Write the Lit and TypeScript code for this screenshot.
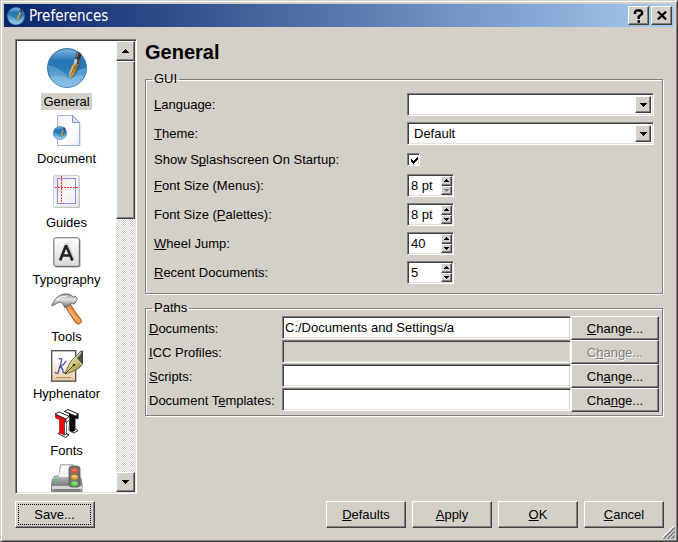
import { LitElement, html, svg, css, nothing, TemplateResult } from "lit";
import { customElement, state } from "lit/decorators.js";

/** Text with one underlined access key. */
const keyed = (text: string, at: number) =>
  at < 0 ? html`${text}` : html`${text.slice(0, at)}<u>${text[at]}</u>${text.slice(at + 1)}`;

/** Blue globe with a paint brush, on a 40 x 40 grid. */
const globe = (id: string) => svg`
  <defs>
    <linearGradient id="${id}-sky" x1="0" y1="0" x2="0" y2="1">
      <stop offset="0" stop-color="#4f93c6"/><stop offset=".3" stop-color="#2a74b2"/>
      <stop offset=".55" stop-color="#2c7cb8"/><stop offset="1" stop-color="#6db4de"/>
    </linearGradient>
    <linearGradient id="${id}-gloss" x1="0" y1="0" x2="0" y2="1">
      <stop offset="0" stop-color="#8cbfe0" stop-opacity=".75"/><stop offset="1" stop-color="#4b97cb" stop-opacity=".1"/>
    </linearGradient>
    <linearGradient id="${id}-gold" x1="0" y1="0" x2="1" y2=".4">
      <stop offset="0" stop-color="#f7e3a8"/><stop offset=".5" stop-color="#d9ac58"/><stop offset="1" stop-color="#6d4a17"/>
    </linearGradient>
  </defs>
  <circle cx="20" cy="20" r="19.5" fill="url(#${id}-sky)" stroke="#2b6a9c" stroke-width=".8"/>
  <path d="M3 13C6 5 13 1.500 20 1.500S34 5 37 13C27 10 13 10 3 13Z" fill="url(#${id}-gloss)"/>
  <path d="M1 17C10 19 18 24 22 31C25 25 32 21 39 20C39 30 31 39 20 39S1 30 1 17Z" fill="#8cc4e6" opacity=".4"/>
  <path d="M3 29C10 27 17 28 22 31C28 28 33 27 37 28C33 36 27 39 20 39S7 36 3 29Z" fill="#a8d8f2" opacity=".35"/>
  <path d="M22 31C27 31 31 24 34 15L32 14Z" fill="#1c4f7c" opacity=".5"/>
  <path d="M22 31C22 26 23 21 27 15L31 16.500C31 22 27 28 22 31Z" fill="url(#${id}-gold)"/>
  <path d="M23 29L28 18" stroke="#5d4316" stroke-width=".7"/>
  <path d="M26.500 15L28 10.500L33 12.500L31.500 17Z" fill="#c3c9ce"/>
  <path d="M30.500 11.500L33 12.500L31.500 17L29.500 16Z" fill="#454b52"/>
  <path d="M28 10.500L30 3.500Q33 4 34.500 6.500L33 12.500Z" fill="#33373d"/>
  <path d="M29.500 9.500L31 4.500" stroke="#9aa1a8" stroke-width="1"/>`;

const globeIcon = (id: string, size: number) =>
  html`<svg width=${size} height=${size} viewBox="0 0 40 40" aria-hidden="true">${globe(id)}</svg>`;

const documentIcon = html`<svg width="32" height="32" viewBox="-1 0 32 32" aria-hidden="true">
  <defs><linearGradient id="sheet" x1="0" y1="0" x2="1" y2="1">
    <stop offset="0" stop-color="#eef1fb"/><stop offset=".6" stop-color="#ffffff"/><stop offset="1" stop-color="#e4e9f7"/>
  </linearGradient></defs>
  <path d="M6 1H21L28.500 8.500V31H6Z" fill="#c9d0e8"/>
  <path d="M5.500 .5H20.500L27.500 7.500V30.500H5.500Z" fill="url(#sheet)" stroke="#a3b1dc"/>
  <path d="M20.500 .5V7.500H27.500Z" fill="#dfe5f6" stroke="#8496cb"/>
  <svg x="1" y="11" width="14" height="14" viewBox="0 0 40 40">${globe("docglobe")}</svg>
</svg>`;

const guidesIcon = html`<svg width="27" height="33" viewBox="0 0 27 33" aria-hidden="true">
  <defs><linearGradient id="guide" x1="0" y1="0" x2="1" y2="1">
    <stop offset="0" stop-color="#dedede"/><stop offset=".5" stop-color="#fafafa"/><stop offset="1" stop-color="#e6e6e6"/>
  </linearGradient></defs>
  <rect x="1" y="1" width="26" height="32" rx="1.500" fill="#b5b5b5"/>
  <rect x=".5" y=".5" width="25.500" height="31.500" rx="1" fill="url(#guide)" stroke="#d2d2d2"/>
  <g shape-rendering="crispEdges">
    <rect x="4.500" y="3.500" width="18" height="25" fill="none" stroke="#8c8cf0"/>
    <path d="M8.500 1V29M2 12.500H26" stroke="#ff2a2a" stroke-dasharray="2 1"/>
  </g>
</svg>`;

const typographyIcon = html`<svg width="28" height="31" viewBox="0 0 28 31" aria-hidden="true">
  <defs><linearGradient id="key" x1="0" y1="0" x2="0" y2="1">
    <stop offset="0" stop-color="#ffffff"/><stop offset="1" stop-color="#dadada"/>
  </linearGradient></defs>
  <rect x="1.500" y="1.500" width="26" height="29" rx="2" fill="#9c9c9c"/>
  <rect x=".8" y=".8" width="25.500" height="28.500" rx="2" fill="url(#key)" stroke="#666"/>
  <path d="M13.500 6L6.500 23M13.500 6L20 22" stroke="#9a9a9a" stroke-width="3" opacity=".35"/>
  <path d="M7.200 23.500L13 8.500L19.500 23.500M9.500 18.500H17.500" fill="none" stroke="#242424" stroke-width="2.600" stroke-linejoin="bevel"/>
</svg>`;

const toolsIcon = html`<svg width="32" height="32" viewBox="0 0 32 32" aria-hidden="true">
  <defs>
    <linearGradient id="wood" x1="0" y1="1" x2="1" y2="0">
      <stop offset=".3" stop-color="#c9651b"/><stop offset=".5" stop-color="#f8a555"/><stop offset=".7" stop-color="#b85a18"/>
    </linearGradient>
    <linearGradient id="steel" x1="0" y1="0" x2="0" y2="1">
      <stop offset="0" stop-color="#8d9294"/><stop offset=".4" stop-color="#e4e7e8"/><stop offset="1" stop-color="#5d6264"/>
    </linearGradient>
  </defs>
  <path d="M14 13L18.500 10L23 17L30 26.500Q31.500 30 28 31Q25.500 31.500 24 29L17.500 19Z" fill="url(#wood)" stroke="#8c4715" stroke-width=".8"/>
  <path d="M18 17L26 28" stroke="#ffd0a0" stroke-width="1"/>
  <path d="M1 12Q4 4 11 1.500Q15 0 19 1.500L22.500 4L24 3L26.500 5.500L23.500 11L20 10.500L18.500 12L14 15L11.500 10Q9 8 6.500 10L1 13Z" fill="url(#steel)" stroke="#64696b" stroke-width=".9" stroke-linejoin="round"/>
  <path d="M5 7Q10 3 16 3" fill="none" stroke="#fff" stroke-width="1"/>
</svg>`;

const hyphenIcon = html`<svg width="32" height="32" viewBox="0 0 32 32" aria-hidden="true">
  <defs>
    <linearGradient id="paper" x1="0" y1="0" x2="0" y2="1">
      <stop offset=".3" stop-color="#fdfdfb"/><stop offset="1" stop-color="#e8c89c"/>
    </linearGradient>
    <linearGradient id="nib" x1="0" y1="0" x2="1" y2="1">
      <stop offset="0" stop-color="#f5edbd"/><stop offset=".5" stop-color="#d4c27c"/><stop offset="1" stop-color="#6d6130"/>
    </linearGradient>
  </defs>
  <rect x=".7" y=".7" width="24" height="30.500" fill="url(#paper)" stroke="#4d4d4d" stroke-width="1.300"/>
  <path d="M8 9Q12 7 10 13L7 23Q5 24 4 22M15 11Q12 16 8 17Q12 17 12 22Q13 24 16 22" fill="none" stroke="#4850a8" stroke-width="1.300"/>
  <path d="M5 27.500H20" stroke="#a89372"/>
  <path d="M14 24C16 19 18 12 24 7L31 15C27 20 21 22 14 24Z" fill="url(#nib)" stroke="#5c532d" stroke-width=".8"/>
  <path d="M14 24L23 15" stroke="#4c4420"/><circle cx="23" cy="15" r="1.300" fill="#332e18"/>
  <path d="M24 7L29 1.500Q31 0 32 1V14L31 15Z" fill="#4b4b45"/>
  <path d="M25.500 7.500L30 2.500" stroke="#d3d2c4" stroke-width="1.500"/><path d="M24 7L31 15" stroke="#d7c987" stroke-width="1.500"/>
</svg>`;

const fontsIcon = html`<svg width="26" height="31" viewBox="0 0 26 31" aria-hidden="true">
  <path d="M16 8L21 10V21L24 22.500L20 25L15 22.500Z" fill="#fff" stroke="#111" stroke-width=".9"/>
  <path d="M10 3.500L15 6V8.500L16 9V23L19 24L21 22.500V10.500L24.500 11V6L14 1.500Z" fill="#0c0c0c"/>
  <path d="M10.500 3.500L14 1.500L24.500 6L21.500 8Z" fill="#fff" stroke="#111" stroke-width=".9"/>
  <path d="M4 25.500L8 23.500L15 27L11.500 29.500Z" fill="#fff" stroke="#111" stroke-width=".9"/>
  <path d="M1.500 6.500L12 11V14.500L10.500 13.500V27L5.500 25V11.500L1.500 10Z" fill="#e80c0c" stroke="#a00" stroke-width=".6"/>
  <path d="M10.500 14L12.500 13.500V26L10.500 27Z" fill="#fff" stroke="#111" stroke-width=".6"/>
  <path d="M1 6L5 4L15.500 8.500L12 11Z" fill="#fff" stroke="#111" stroke-width=".9"/>
  <path d="M12 11L15.500 8.500V12L12 14.500Z" fill="#fff" stroke="#111" stroke-width=".7"/>
</svg>`;

const printerIcon = html`<svg width="32" height="32" viewBox="0 0 32 32" aria-hidden="true">
  <defs><linearGradient id="case" x1="0" y1="0" x2="0" y2="1">
    <stop offset="0" stop-color="#c0c0c0"/><stop offset=".5" stop-color="#858585"/><stop offset="1" stop-color="#a0a0a0"/>
  </linearGradient></defs>
  <path d="M9.500 .8H22V16H7.500Z" fill="#f7f7f7" stroke="#999"/>
  <path d="M4 12H28Q31 14 31 20V28H.5V20Q1 14 4 12Z" fill="url(#case)" stroke="#747474" stroke-width=".8"/>
  <path d="M8.500 8H20V13H7.500Z" fill="#f4f4f4"/>
  <path d="M1 22H31V25H1Z" fill="#d4d4d4"/><path d="M3 25H29V28H3Z" fill="#808080"/>
  <path d="M4 16H6M8 16H10" stroke="#37d637" stroke-width="2"/>
  <rect x="18" y="2" width="11" height="21" rx="3" fill="#747474" stroke="#555" stroke-width=".8"/>
  <ellipse cx="23.500" cy="6.500" rx="3.400" ry="2.600" fill="#ee4b34"/><ellipse cx="23.500" cy="13" rx="3.400" ry="2.600" fill="#f4ab2d"/>
  <ellipse cx="23.500" cy="19.500" rx="3.400" ry="2.600" fill="#55d645"/>
  <path d="M21.500 6H25.500M21.500 12.500H25.500M21.500 19H25.500" stroke="#fff" opacity=".6"/>
</svg>`;

const arrow = (up: boolean, w: number) => {
  const h = Math.ceil(w / 2);
  return html`<svg width=${w} height=${h} viewBox="0 0 ${w} ${h}" fill="currentColor" shape-rendering="crispEdges" aria-hidden="true">
    <path d=${up ? `M0 ${h}L${w / 2} 0L${w} ${h}Z` : `M0 0L${w / 2} ${h}L${w} 0Z`}></path></svg>`;
};

interface Section { name: string; icon: TemplateResult; size?: string }

const sections: Section[] = [
  { name: "General", icon: globeIcon("main", 40), size: "large" },
  { name: "Document", icon: documentIcon },
  { name: "Guides", icon: guidesIcon, size: "medium" },
  { name: "Typography", icon: typographyIcon },
  { name: "Tools", icon: toolsIcon },
  { name: "Hyphenator", icon: hyphenIcon },
  { name: "Fonts", icon: fontsIcon },
  { name: "", icon: printerIcon },
];

const spins = [
  { id: "menus", label: "Font Size (Menus):", key: 0, value: "8 pt", atMin: true },
  { id: "palettes", label: "Font Size (Palettes):", key: 11, value: "8 pt", atMin: false },
  { id: "wheel", label: "Wheel Jump:", key: 0, value: "40", atMin: false },
  { id: "recent", label: "Recent Documents:", key: 0, value: "5", atMin: false },
];

const paths = [
  { id: "docs", label: "Documents:", key: 0, value: "C:/Documents and Settings/a", change: 0, off: false },
  { id: "icc", label: "ICC Profiles:", key: 0, value: "", change: 1, off: true },
  { id: "scripts", label: "Scripts:", key: 0, value: "", change: 2, off: false },
  { id: "templates", label: "Document Templates:", key: 10, value: "", change: 3, off: false },
];

@customElement("app-root")
export class AppRoot extends LitElement {
  @state() private current = "General";

  static styles = css`
    :host {
      --face: #d4d0c8;
      display: block;
      font: 13px/17px "Liberation Sans", Arial, sans-serif;
      color: #000;
    }
    * { box-sizing: border-box; }
    svg { display: block; flex: none; }
    u { text-underline-offset: 1px; text-decoration-thickness: 1px; text-decoration-skip-ink: none; }
    button, input, select { font: inherit; color: inherit; margin: 0; padding: 0; border-radius: 0; outline: none; }
    .window {
      position: relative;
      display: flex;
      flex-direction: column;
      min-height: 100vh;
      padding: 2px;
      background: var(--face);
      border: 1px solid;
      border-color: var(--face) #404040 #404040 var(--face);
      box-shadow: inset 1px 1px #fff, inset -1px -1px #808080;
    }
    .titlebar {
      display: flex;
      align-items: center;
      gap: 2px;
      height: 23px;
      margin: 1px 1px 0;
      padding: 0 2px 0 3px;
      color: #fff;
      background: linear-gradient(90deg, #0a246a, #a6caf0);
    }
    .title { flex: 1; margin: 0; padding-left: 2px; font: 15px/20px "DejaVu Sans Condensed", "DejaVu Sans", sans-serif; }
    .raised {
      display: flex;
      align-items: center;
      justify-content: center;
      background: var(--face);
      border: 1px solid;
      border-color: #fff #404040 #404040 #fff;
      box-shadow: inset -1px -1px #808080;
    }
    .caption { width: 21px; height: 19px; color: #000; }
    .body { flex: 1; display: flex; gap: 8px; padding: 12px 11px 0 12px; }
    .list {
      display: flex;
      flex: none;
      width: 122px;
      contain: size;
      overflow: hidden;
      background: #fff;
    }
    .sunken {
      border: 1px solid;
      border-color: #808080 #fff #fff #808080;
      box-shadow: inset 1px 1px #404040, inset -1px -1px #e4e0d8;
    }
    .items { flex: 1; margin: 2px 0 1px 2px; padding: 6px 0 0; overflow: hidden; }
    .item {
      display: flex;
      flex-direction: column;
      align-items: center;
      gap: 3px;
      width: 100%;
      margin-bottom: 5px;
      border: 0;
      background: none;
    }
    .glyph { display: flex; align-items: center; justify-content: center; height: 32px; }
    .glyph.large { height: 42px; align-items: flex-start; }
    .glyph.medium { height: 39px; }
    .name { padding: 0 2px; }
    .name.on { background: var(--face); }
    .scroll {
      display: flex;
      flex-direction: column;
      width: 19px;
      margin: 1px;
      background: repeating-conic-gradient(#fff 0 25%, var(--face) 0 50%) 0 0 / 2px 2px;
    }
    .step { height: 20px; width: 100%; }
    .thumb { height: 158px; }
    .space { flex: 1; }
    .page { flex: 1; min-width: 0; }
    h1 { margin: 1px 0 7px; font-size: 20px; line-height: 24px; }
    fieldset { min-width: 0; margin: 0; }
    .group {
      display: grid;
      border: 1px solid #808080;
      box-shadow: 1px 1px #fff, inset 1px 1px #fff;
      margin-right: 1px;
    }
    legend { padding: 0 2px; line-height: 16px; }
    .gui { grid-template-columns: 1fr 1fr; gap: 6px; padding: 6px 8px 9px; align-items: center; }
    .gui legend { margin-left: -2px; }
    .combo { display: grid; height: 23px; padding: 2px; background: #fff; }
    .combo > * { grid-area: 1 / 1; }
    .combo select { appearance: none; width: 100%; padding-left: 4px; border: 0; background: #fff; }
    .drop { justify-self: end; width: 16px; pointer-events: none; }
    .checkrow { height: 17px; line-height: 17px; }
    .check { display: grid; width: 13px; height: 13px; background: #fff; place-items: center; }
    .check > * { grid-area: 1 / 1; }
    .check input { appearance: none; width: 13px; height: 13px; }
    .check svg { pointer-events: none; visibility: hidden; }
    .check input:checked + svg { visibility: visible; }
    .spin { display: flex; width: 47px; height: 23px; padding: 1px; background: #fff; }
    .spin input { flex: 1; min-width: 0; padding-left: 2px; border: 0; background: none; }
    .steps { display: flex; flex-direction: column; width: 11px; }
    .steps .raised { flex: 1; width: 100%; min-height: 0; }
    .steps .raised:disabled { color: #808080; }
    .paths { grid-template-columns: minmax(133px, auto) 1fr 88px; padding: 0 3px 3px; margin-top: 6px; }
    .paths legend { margin-left: 3px; }
    .paths label { align-self: center; white-space: nowrap; }
    .field { width: 100%; min-width: 0; height: 23px; padding: 0 2px; background: #fff; }
    .field:disabled { background: var(--face); }
    .change { height: 24px; }
    .change:disabled { color: #808080; text-shadow: 1px 1px #fff; }
    .footer { display: flex; gap: 6px; padding: 7px 11px 11px 12px; }
    .push { width: 80px; height: 27px; }
    .save { margin-right: auto; }
    .save span { flex: 1; margin: 0 3px 0 2px; border: 1px dotted #000; line-height: 19px; }
    .grip { position: absolute; right: 2px; bottom: 2px; }
  `;

  private combo(id: string, options: string[]) {
    return html`<div class="combo sunken">
      <select id=${id}>${options.map((o) => html`<option>${o}</option>`)}</select>
      <span class="drop raised">${arrow(false, 7)}</span>
    </div>`;
  }

  render() {
    return html`<div class="window">
      <header class="titlebar">
        ${globeIcon("small", 18)}
        <p class="title">Preferences</p>
        <button class="caption raised" aria-label="Help">
          <svg width="11" height="14" viewBox="0 0 11 14" fill="none" stroke="#000" stroke-width="2.400"><path d="M2 5V3L3.500 1.500H7.500L9 3V5L5.700 7.500V10M4.500 12.500H7"/></svg>
        </button>
        <button class="caption raised" aria-label="Close">
          <svg width="10" height="9" viewBox="0 0 10 9" fill="none" stroke="#000" stroke-width="2.200"><path d="M.8 .5L9.200 8.500M9.200 .5L.8 8.500"/></svg>
        </button>
      </header>
      <main class="body">
        <nav class="list sunken" aria-label="Sections">
          <div class="items">
            ${sections.map((s) => html`<button class="item" @click=${() => (this.current = s.name)}>
              <span class="glyph ${s.size ?? ""}">${s.icon}</span>
              ${s.name ? html`<span class="name ${this.current === s.name ? "on" : ""}">${s.name}</span>` : nothing}
            </button>`)}
          </div>
          <div class="scroll">
            <button class="step raised" aria-label="Scroll up">${arrow(true, 7)}</button>
            <div class="thumb raised"></div>
            <div class="space"></div>
            <button class="step raised" aria-label="Scroll down">${arrow(false, 7)}</button>
          </div>
        </nav>
        <section class="page">
          <h1>General</h1>
          <fieldset class="group gui">
            <legend>GUI</legend>
            <label for="language">${keyed("Language:", 0)}</label>
            ${this.combo("language", [""])}
            <label for="theme">${keyed("Theme:", 0)}</label>
            ${this.combo("theme", ["Default"])}
            <label class="checkrow" for="splash">${keyed("Show Splashscreen On Startup:", 6)}</label>
            <span class="check sunken">
              <input id="splash" type="checkbox" checked />
              <svg width="7" height="7" viewBox="0 0 7 7" shape-rendering="crispEdges"><path d="M0 2H1V3H2V4H3V3H4V2H5V1H6V0H7V3H6V4H5V5H4V6H3V7H2V6H1V5H0Z"/></svg>
            </span>
            ${spins.map((s) => html`
              <label for=${s.id}>${keyed(s.label, s.key)}</label>
              <div class="spin sunken">
                <input id=${s.id} type="text" .value=${s.value} />
                <div class="steps">
                  <button class="raised" aria-label="Increase">${arrow(true, 5)}</button>
                  <button class="raised" aria-label="Decrease" ?disabled=${s.atMin}>${arrow(false, 5)}</button>
                </div>
              </div>`)}
          </fieldset>
          <fieldset class="group paths">
            <legend>Paths</legend>
            ${paths.map((p) => html`
              <label for=${p.id}>${keyed(p.label, p.key)}</label>
              <input class="field sunken" id=${p.id} type="text" .value=${p.value} ?disabled=${p.off} />
              <button class="change raised" ?disabled=${p.off}><span>${keyed("Change...", p.change)}</span></button>`)}
          </fieldset>
        </section>
      </main>
      <footer class="footer">
        <button class="push raised save"><span>Save...</span></button>
        <button class="push raised"><span>${keyed("Defaults", 0)}</span></button>
        <button class="push raised"><span>${keyed("Apply", 0)}</span></button>
        <button class="push raised"><span>${keyed("OK", 0)}</span></button>
        <button class="push raised"><span>${keyed("Cancel", 0)}</span></button>
      </footer>
      <svg class="grip" width="13" height="13" viewBox="0 0 13 13" aria-hidden="true">
        <path d="M0 12L12 0M4 12L12 4M8 12L12 8" stroke="#fff" stroke-width="1.200"/>
        <path d="M1.500 13L13 1.500M5.500 13L13 5.500M9.500 13L13 9.500" stroke="#808080" stroke-width="1.800"/>
      </svg>
    </div>`;
  }
}
